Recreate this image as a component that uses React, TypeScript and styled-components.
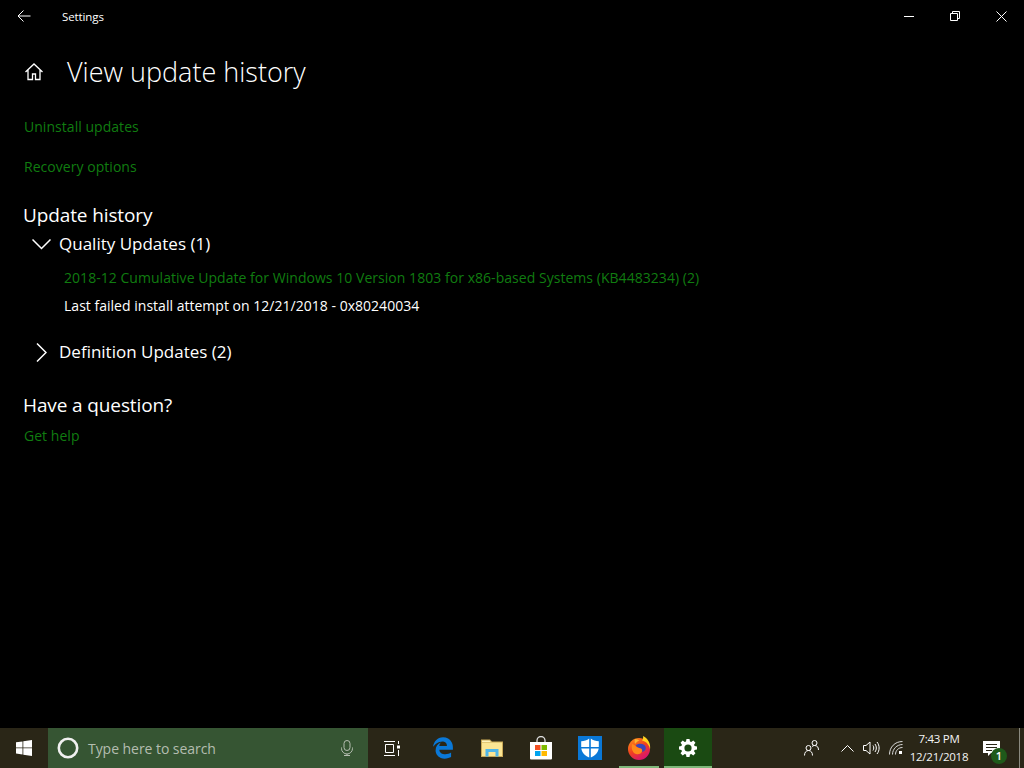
import styled, { createGlobalStyle } from "styled-components";
import { FaEdgeLegacy } from "react-icons/fa";

const GlobalStyle = createGlobalStyle`
  html, body {
    margin: 0;
    padding: 0;
    height: 100%;
    background: #000;
  }
  body {
    font-family: "Open Sans", "Noto Sans", "Liberation Sans", sans-serif;
    color: #fff;
    overflow: hidden;
  }
`;

const Screen = styled.div`
  width: 1024px;
  height: 768px;
  display: flex;
  flex-direction: column;
  background: #000;
`;

const Window = styled.main`
  flex: 1;
  min-height: 0;
  display: flex;
  flex-direction: column;
`;

const TitleBar = styled.header`
  height: 32px;
  display: flex;
  align-items: center;
`;

const BackButton = styled.div`
  width: 48px;
  height: 32px;
  display: flex;
  align-items: center;
  justify-content: center;
`;

const AppName = styled.span`
  margin-left: 14px;
  font-size: 11.5px;
  letter-spacing: -0.1px;
`;

const WindowControls = styled.div`
  margin-left: auto;
  display: flex;
`;

const WindowButton = styled.div`
  width: 46px;
  height: 32px;
  display: flex;
  align-items: center;
  justify-content: center;
`;

const Content = styled.div`
  padding: 0 24px;
  display: flex;
  flex-direction: column;
`;

const PageHeader = styled.div`
  display: flex;
  align-items: center;
  height: 40px;
  margin-top: 20px;
`;

const HomeIcon = styled.div`
  width: 20px;
  height: 20px;
  display: flex;
  margin-right: 23px;
`;

const PageTitle = styled.h1`
  margin: 0;
  font-size: 27px;
  font-weight: 300;
  line-height: 40px;
`;

const Link = styled.a<{ $top?: number }>`
  display: block;
  color: #107c10;
  font-size: 14px;
  line-height: 20px;
  letter-spacing: 0.04px;
  margin-top: ${({ $top }) => $top ?? 0}px;
`;

const SectionTitle = styled.h2<{ $top: number }>`
  margin: ${({ $top }) => $top}px 0 0 -1px;
  font-size: 19px;
  font-weight: 400;
  letter-spacing: -0.12px;
  line-height: 26px;
`;

const GroupRow = styled.div<{ $top: number }>`
  display: flex;
  align-items: center;
  height: 24px;
  margin-top: ${({ $top }) => $top}px;
`;

const Chevron = styled.div`
  width: 35px;
  height: 24px;
  display: flex;
  align-items: center;
  justify-content: center;
`;

const GroupName = styled.span`
  font-size: 17px;
  line-height: 24px;
`;

const UpdateList = styled.div`
  padding-left: 40px;
  margin-top: 12px;
`;

const UpdateStatus = styled.div`
  font-size: 14px;
  line-height: 20px;
  letter-spacing: 0.02px;
  margin-top: 8px;
`;

const Taskbar = styled.footer`
  height: 40px;
  background: #2a2617;
  display: flex;
  align-items: stretch;
`;

const StartButton = styled.div`
  width: 48px;
  display: flex;
  align-items: center;
  justify-content: center;
`;

const SearchBox = styled.div`
  width: 320px;
  background: #365533;
  display: flex;
  align-items: center;
  padding: 0 15px 0 8px;
  box-sizing: border-box;
`;

const SearchPlaceholder = styled.span`
  margin-left: 8px;
  font-size: 14px;
  letter-spacing: -0.05px;
  color: #b4bdb0;
`;

const MicSlot = styled.div`
  margin-left: auto;
  display: flex;
`;

const TaskGroup = styled.div`
  display: flex;
  gap: 1px;
  margin-left: 3px;
`;

const TaskIcon = styled.div<{ $active?: boolean; $open?: boolean }>`
  width: 48px;
  position: relative;
  display: flex;
  align-items: center;
  justify-content: center;
  background: ${({ $active }) => ($active ? "#1a4a12" : "transparent")};

  &::after {
    content: "";
    display: ${({ $open }) => ($open ? "block" : "none")};
    position: absolute;
    bottom: 0;
    height: 2px;
    left: ${({ $active }) => ($active ? 0 : 4)}px;
    right: ${({ $active }) => ($active ? 0 : 4)}px;
    background: #7fb87a;
  }
`;

const Tray = styled.div`
  margin-left: auto;
  display: flex;
  align-items: center;
`;

const TrayIcon = styled.div<{ $width: number }>`
  width: ${({ $width }) => $width}px;
  height: 40px;
  display: flex;
  align-items: center;
  justify-content: center;
`;

const Clock = styled.div`
  width: 64px;
  white-space: nowrap;
  display: flex;
  flex-direction: column;
  align-items: center;
  font-size: 11.5px;
  line-height: 18px;
  letter-spacing: -0.25px;
  color: #f4f4f4;
`;

const Notifications = styled.div`
  width: 48px;
  height: 40px;
  padding-left: 12px;
  box-sizing: border-box;
  position: relative;
  display: flex;
  align-items: center;
`;

const Badge = styled.span`
  position: absolute;
  left: 20px;
  top: 20px;
  width: 16px;
  height: 16px;
  border-radius: 50%;
  background: #1f5a1a;
  color: #fff;
  font-size: 11px;
  font-weight: 600;
  line-height: 16px;
  text-align: center;
`;

const ShowDesktop = styled.div`
  width: 5px;
  height: 40px;
  border-left: 1px solid #8a8a80;
  box-sizing: border-box;
`;

export default function App() {
  return (
    <Screen>
      <GlobalStyle />
      <Window>
        <TitleBar>
          <BackButton>
            <svg width="14" height="12" viewBox="0 0 14 12" fill="none" stroke="#fff" strokeWidth="1">
              <path d="M13.500 6H1M6.500.5 1 6l5.500 5.500" />
            </svg>
          </BackButton>
          <AppName>Settings</AppName>
          <WindowControls>
            <WindowButton>
              <svg width="10" height="10" viewBox="0 0 10 10" stroke="#fff" strokeWidth="1">
                <path d="M0 5.500h10" />
              </svg>
            </WindowButton>
            <WindowButton>
              <svg width="10" height="10" viewBox="0 0 10 10" fill="none" stroke="#fff" strokeWidth="1">
                <path d="M.5 2.500h7v7h-7zM2.500 2.500v-2h7v7h-2" />
              </svg>
            </WindowButton>
            <WindowButton>
              <svg width="11" height="11" viewBox="0 0 11 11" stroke="#fff" strokeWidth="1">
                <path d="M.5.5l10 10M10.500.5l-10 10" />
              </svg>
            </WindowButton>
          </WindowControls>
        </TitleBar>
        <Content>
          <PageHeader>
            <HomeIcon>
              <svg width="20" height="20" viewBox="0 0 20 20" fill="none" stroke="#fff" strokeWidth="1.300">
                <path d="M1.500 10 10 2l8.500 8M4 8v9.500h4.500V12h3v5.500H16V8" />
              </svg>
            </HomeIcon>
            <PageTitle>View update history</PageTitle>
          </PageHeader>
          <Link $top={25}>Uninstall updates</Link>
          <Link $top={20}>Recovery options</Link>
          <SectionTitle $top={25}>Update history</SectionTitle>
          <GroupRow $top={4}>
            <Chevron>
              <svg width="19" height="11" viewBox="0 0 19 11" fill="none" stroke="#fff" strokeWidth="1.500">
                <path d="M.5.5 9.500 9.500l9-9" />
              </svg>
            </Chevron>
            <GroupName>Quality Updates (1)</GroupName>
          </GroupRow>
          <UpdateList>
            <Link>2018-12 Cumulative Update for Windows 10 Version 1803 for x86-based Systems (KB4483234) (2)</Link>
            <UpdateStatus>Last failed install attempt on 12/21/2018 - 0x80240034</UpdateStatus>
          </UpdateList>
          <GroupRow $top={24}>
            <Chevron>
              <svg width="11" height="19" viewBox="0 0 11 19" fill="none" stroke="#fff" strokeWidth="1.500">
                <path d="M1 .5l9 9-9 9" />
              </svg>
            </Chevron>
            <GroupName>Definition Updates (2)</GroupName>
          </GroupRow>
          <SectionTitle $top={28}>Have a question?</SectionTitle>
          <Link $top={8}>Get help</Link>
        </Content>
      </Window>
      <Taskbar>
        <StartButton>
          <svg width="16" height="16" viewBox="0 0 16 16" fill="#fff">
            <path d="M0 2.300 6.500 1.400V7.500H0zM7.300 1.300 16 0V7.500H7.300zM0 8.300H6.500V14.500L0 13.600zM7.300 8.300H16V16L7.300 14.700z" />
          </svg>
        </StartButton>
        <SearchBox>
          <svg width="24" height="24" viewBox="0 0 24 24" fill="none" stroke="#f0f0f0" strokeWidth="2.600">
            <circle cx="12" cy="12" r="9.200" />
          </svg>
          <SearchPlaceholder>Type here to search</SearchPlaceholder>
          <MicSlot>
            <svg width="12" height="16" viewBox="0 0 12 16" fill="none" stroke="#b4bdb0" strokeWidth="1">
              <rect x="3" y=".5" width="6" height="10" rx="3" />
              <path d="M.5 7.500v1a5.500 5.500 0 0 0 11 0v-1M6 14v1.500M3 15.500h6" />
            </svg>
          </MicSlot>
        </SearchBox>
        <TaskIcon>
          <svg width="16" height="15" viewBox="0 0 16 15" fill="none" stroke="#fff" strokeWidth="1">
            <path d="M0 .5h11M0 14.500h11M1.500 3.500h8v8h-8zM14.500 0v3M14.500 9v6" />
            <rect x="13" y="4.500" width="3" height="3" fill="#fff" stroke="none" />
          </svg>
        </TaskIcon>
        <TaskGroup>
          <TaskIcon>
            <FaEdgeLegacy size={22} color="#0a78d7" />
          </TaskIcon>
          <TaskIcon>
            <svg width="22" height="18" viewBox="0 0 22 18">
              <path fill="#c9a957" d="M0 .5h9l2 2h11V18H0z" />
              <path fill="#fbe593" d="M1 3.500h20v13.500H1z" />
              <path fill="#fff3bd" d="M1 1.500h7.500l1.500 1.500H1z" />
              <path fill="#4fb6e8" d="M4.500 17.500V10h13v7.500h-3V13h-7v4.500z" />
            </svg>
          </TaskIcon>
          <TaskIcon>
            <svg width="24" height="24" viewBox="0 0 24 24">
              <path fill="none" stroke="#ddd" strokeWidth="1.300" d="M8 7V4.500a4 4 0 0 1 8 0V7" />
              <path fill="#fff" d="M1 6h22v16.500a1 1 0 0 1-1 1H2a1 1 0 0 1-1-1z" />
              <path fill="#f25022" d="M6 9h5.500v5H6z" />
              <path fill="#7fba00" d="M12.500 9H18v5h-5.500z" />
              <path fill="#00a4ef" d="M6 15h5.500v5H6z" />
              <path fill="#ffb900" d="M12.500 15H18v5h-5.500z" />
            </svg>
          </TaskIcon>
          <TaskIcon>
            <svg width="24" height="24" viewBox="0 0 24 24">
              <path fill="#0a78d7" d="M0 0h24v24H0z" />
              <path fill="#fff" d="M11.200 2.500V11H3.200V5.300c3 0 5.800-1 8-2.800zM12.800 2.500c2.200 1.800 5 2.800 8 2.800V11h-8zM3.300 12.600h7.900v8.900C7 20 4 17 3.300 12.600zM12.800 12.600h7.900C20 17 17 20 12.800 21.500z" />
            </svg>
          </TaskIcon>
          <TaskIcon $open>
            <svg width="24" height="24" viewBox="0 0 24 24">
              <defs>
                <linearGradient id="foxBody" x1="0" y1="0" x2=".6" y2="1">
                  <stop offset="0" stopColor="#ff9a1a" />
                  <stop offset=".55" stopColor="#f0401f" />
                  <stop offset="1" stopColor="#d9136f" />
                </linearGradient>
              </defs>
              <circle cx="12" cy="13" r="11" fill="url(#foxBody)" />
              <path fill="#3b46b8" d="M9 9c3-2 8-2 9.500 1.500 1 3-1 5-3.500 5.500 .8-1.800 0-3.500-2.500-4C10 11.500 9 10.500 9 9z" />
              <path fill="#ffd21f" d="M16 0c5 2.500 8 7.500 7 13.500-.7-4.500-3.500-8-8-9 1.200-1 1.300-3 1-4.500z" />
              <path fill="#ff8a1a" d="M5 8c3 .5 4 3.500 7 4 2.500.3 3.500 1.500 3 3.500-.5 2-3.500 3.500-6 2.500C5.500 17 4 12.500 5 8z" />
              <path fill="#ffb52e" d="M8 3c2 0 3 1 4.500 1.500C10.500 5 9 6.500 8 8 7.500 6.500 7.500 4.500 8 3z" />
            </svg>
          </TaskIcon>
          <TaskIcon $active $open>
            <svg width="18" height="18" viewBox="0 0 20 20">
              <path
                fill="#fff"
                fillRule="evenodd"
                d="M8.300 0h3.400l.5 2.700 1.400.6L15.900 1.700l2.400 2.400-1.600 2.300.6 1.400 2.700.5v3.400l-2.700.5-.6 1.400 1.600 2.300-2.400 2.400-2.300-1.600-1.400.6-.5 2.700H8.300l-.5-2.700-1.400-.6-2.300 1.600-2.400-2.400 1.600-2.300-.6-1.400L0 11.700V8.300l2.700-.5.600-1.400-1.600-2.300 2.400-2.400 2.300 1.600 1.400-.6zM10 6a4 4 0 1 0 0 8 4 4 0 0 0 0-8z"
              />
            </svg>
          </TaskIcon>
        </TaskGroup>
        <Tray>
          <TrayIcon $width={52}>
            <svg width="15" height="16" viewBox="0 0 15 16" fill="none" stroke="#fff" strokeWidth="1">
              <circle cx="4.500" cy="8" r="2.500" />
              <circle cx="10.500" cy="3" r="2.500" />
              <path d="M.5 15.500c0-3 1.500-5 4-5s4 2 4 5M8 6.500c.5-.5 1.500-1 2.500-1 2.500 0 4 1.500 4 4.500" />
            </svg>
          </TrayIcon>
          <TrayIcon $width={20}>
            <svg width="13" height="7" viewBox="0 0 13 7" fill="none" stroke="#fff" strokeWidth="1">
              <path d="M.5 6.500l6-6 6 6" />
            </svg>
          </TrayIcon>
          <TrayIcon $width={28}>
            <svg width="17" height="14" viewBox="0 0 17 14" fill="none" stroke="#fff" strokeWidth="1">
              <path d="M.5 4.500h2.500L7 1v12L3 9.500H.5zM10 4.500c1 1.500 1 3.500 0 5M12 3c1.800 2.400 1.800 5.600 0 8M14 1c2.800 3.500 2.800 8.500 0 12" />
            </svg>
          </TrayIcon>
          <TrayIcon $width={22}>
            <svg width="14" height="14" viewBox="0 0 14 14" fill="none" stroke="#ddd" strokeWidth="1">
              <path d="M.5 13.500C.5 6 6 .5 13.500.5M3.500 13.500C3.500 8 8 3.500 13.500 3.500M6.500 13.500c0-4 3-7 7-7" />
              <rect x="10" y="10" width="3" height="3" fill="#fff" stroke="none" />
            </svg>
          </TrayIcon>
          <Clock>
            <span>7:43 PM</span>
            <span>12/21/2018</span>
          </Clock>
          <Notifications>
            <svg width="17" height="15" viewBox="0 0 17 15" fill="#fff">
              <path d="M0 0h17v12H8l-3 3v-3H0z" />
              <path stroke="#2a2617" d="M3 3.500h11M3 6.500h11M3 9.500h6" />
            </svg>
            <Badge>1</Badge>
          </Notifications>
          <ShowDesktop />
        </Tray>
      </Taskbar>
    </Screen>
  );
}
